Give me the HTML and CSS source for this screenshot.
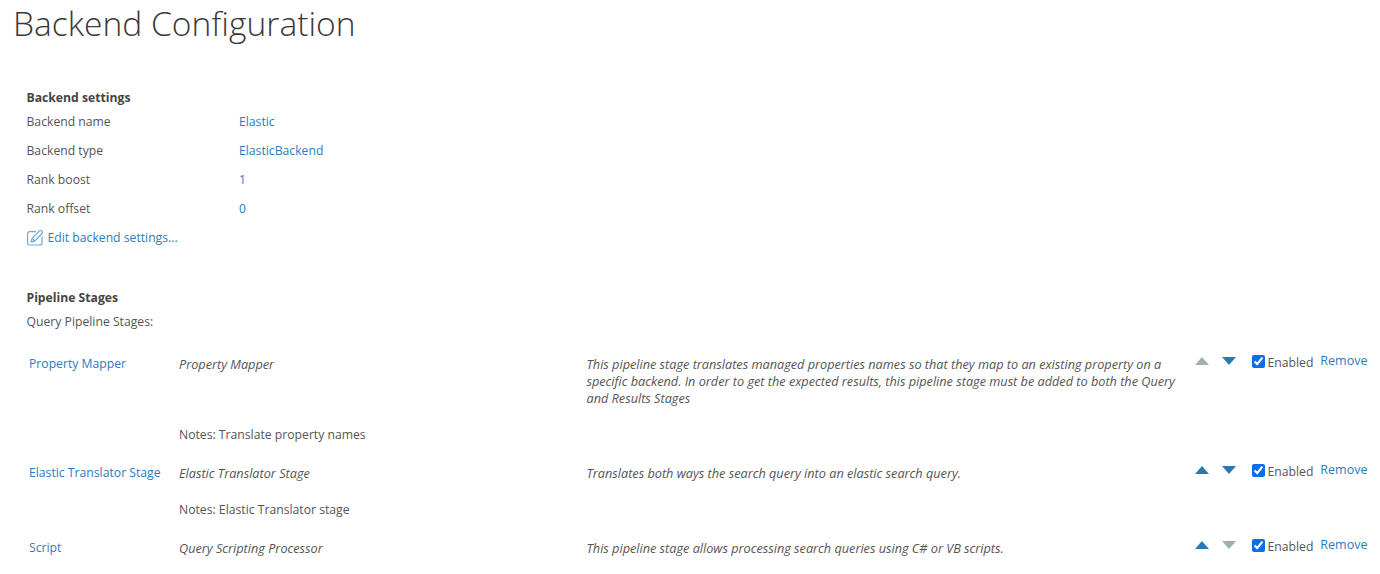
FILE: index.html
```html
<!DOCTYPE html>
<html lang="en">
<head>
<meta charset="utf-8">
<title>Backend Configuration</title>
<link rel="stylesheet" href="styles.css">
</head>
<body>
<h1 class="title">Backend Configuration</h1>
<section class="settings">
  <h2 class="section-head">Backend settings</h2>
  <div class="kv"><span>Backend name</span><a href="#">Elastic</a></div>
  <div class="kv"><span>Backend type</span><a href="#">ElasticBackend</a></div>
  <div class="kv"><span>Rank boost</span><a href="#">1</a></div>
  <div class="kv"><span>Rank offset</span><a href="#">0</a></div>
  <a class="edit" href="#">
    <svg class="edit-icon" width="16" height="17" viewBox="0 0 16 17" fill="none" stroke="#6aaedb" stroke-width="1.200"><path d="M9 2.600H2.500A2 2 0 0 0 .6 4.600V14A2 2 0 0 0 2.500 16H13A2 2 0 0 0 15 14V7.500"/><path d="M4.200 12.900l.8-3.400L12.600 1.600a1.200 1.200 0 0 1 1.700 0l.9.9a1.200 1.200 0 0 1 0 1.700L7.600 12.100z"/><path d="M5.200 9.400l2.400 2.600"/></svg>
    Edit backend settings...
  </a>
</section>
<section class="pipeline">
  <h2 class="section-head">Pipeline Stages</h2>
  <p class="sub">Query Pipeline Stages:</p>
  <div class="stage stage-first">
    <a class="name" href="#">Property Mapper</a>
    <em class="type">Property Mapper</em>
    <em class="desc">This pipeline stage translates managed properties names so that they map to an existing property on a specific backend. In order to get the expected results, this pipeline stage must be added to both the Query and Results Stages</em>
    <div class="actions">
      <span class="arrow up off"></span><span class="arrow down"></span>
      <label class="check"><input type="checkbox" checked><span class="check-label">Enabled</span></label>
      <a class="remove" href="#">Remove</a>
    </div>
    <div class="notes">Notes: Translate property names</div>
  </div>
  <div class="stage">
    <a class="name" href="#">Elastic Translator Stage</a>
    <em class="type">Elastic Translator Stage</em>
    <em class="desc">Translates both ways the search query into an elastic search query.</em>
    <div class="actions">
      <span class="arrow up"></span><span class="arrow down"></span>
      <label class="check"><input type="checkbox" checked><span class="check-label">Enabled</span></label>
      <a class="remove" href="#">Remove</a>
    </div>
    <div class="notes">Notes: Elastic Translator stage</div>
  </div>
  <div class="stage">
    <a class="name" href="#">Script</a>
    <em class="type">Query Scripting Processor</em>
    <em class="desc">This pipeline stage allows processing search queries using C# or VB scripts.</em>
    <div class="actions">
      <span class="arrow up"></span><span class="arrow down off"></span>
      <label class="check"><input type="checkbox" checked><span class="check-label">Enabled</span></label>
      <a class="remove" href="#">Remove</a>
    </div>
  </div>
</section>
</body>
</html>
```
FILE: styles.css
```css
html, body { margin: 0; padding: 0; }
body {
  font-family: "Open Sans", "Noto Sans", sans-serif;
  font-size: 12.2px;
  color: #555;
  background: #fff;
  height: 574px;
  overflow: hidden;
}
a { color: #2b7cc0; text-decoration: none; }
.title {
  margin: 0;
  padding: 0 0 0 13px;
  font-size: 33.6px;
  line-height: 46px;
  font-weight: 300;
  color: #3a3a3a;
}
.settings { padding: 40px 0 0 26.500px; }
.section-head {
  margin: 0;
  font-size: 12.2px;
  line-height: 24px;
  font-weight: 700;
  color: #444;
}
.kv { display: flex; height: 29px; align-items: center; }
.kv:first-of-type { margin-top: -3px; }
.kv span { width: 212.500px; }
.edit { display: flex; align-items: center; gap: 5px; height: 29px; }
.edit-icon { flex: none; }
.pipeline { padding: 34px 0 0 26.500px; }
.sub { margin: 0; line-height: 24px; height: 26px; }
.stage {
  display: grid;
  grid-template-columns: 150px 407.500px 606px 1fr;
  padding-left: 2.500px;
  align-items: start;
}
.stage-first { margin-top: 18px; }
.name { line-height: 18px; margin-top: 1px; }
.type, .desc { color: #555; font-size: 12.700px; }
.type { line-height: 18px; margin-top: 1px; }
.desc { width: 592px; line-height: 17px; margin-top: 2px; }
.notes { grid-column: 2 / 5; padding: 19px 0 19px; line-height: 18px; }
.actions { display: flex; align-items: center; height: 14px; margin-left: 2px; }
.arrow { width: 0; height: 0; border-left: 7.500px solid transparent; border-right: 7.500px solid transparent; margin-right: 13px; }
.up { border-bottom: 8px solid #2a7ab0; }
.down { border-top: 8px solid #2a7ab0; }
.up.off { border-bottom-color: #9fb0b0; }
.down.off { border-top-color: #9fb0b0; }
.check { display: flex; align-items: center; margin-left: 3px; }
.check input { width: 13px; height: 13px; margin: 0 3px 0 0; accent-color: #0b6fe8; }
.check-label { position: relative; top: 1px; }
.remove { margin-left: 7px; position: relative; top: -1px; font-size: 12.500px; }
```
